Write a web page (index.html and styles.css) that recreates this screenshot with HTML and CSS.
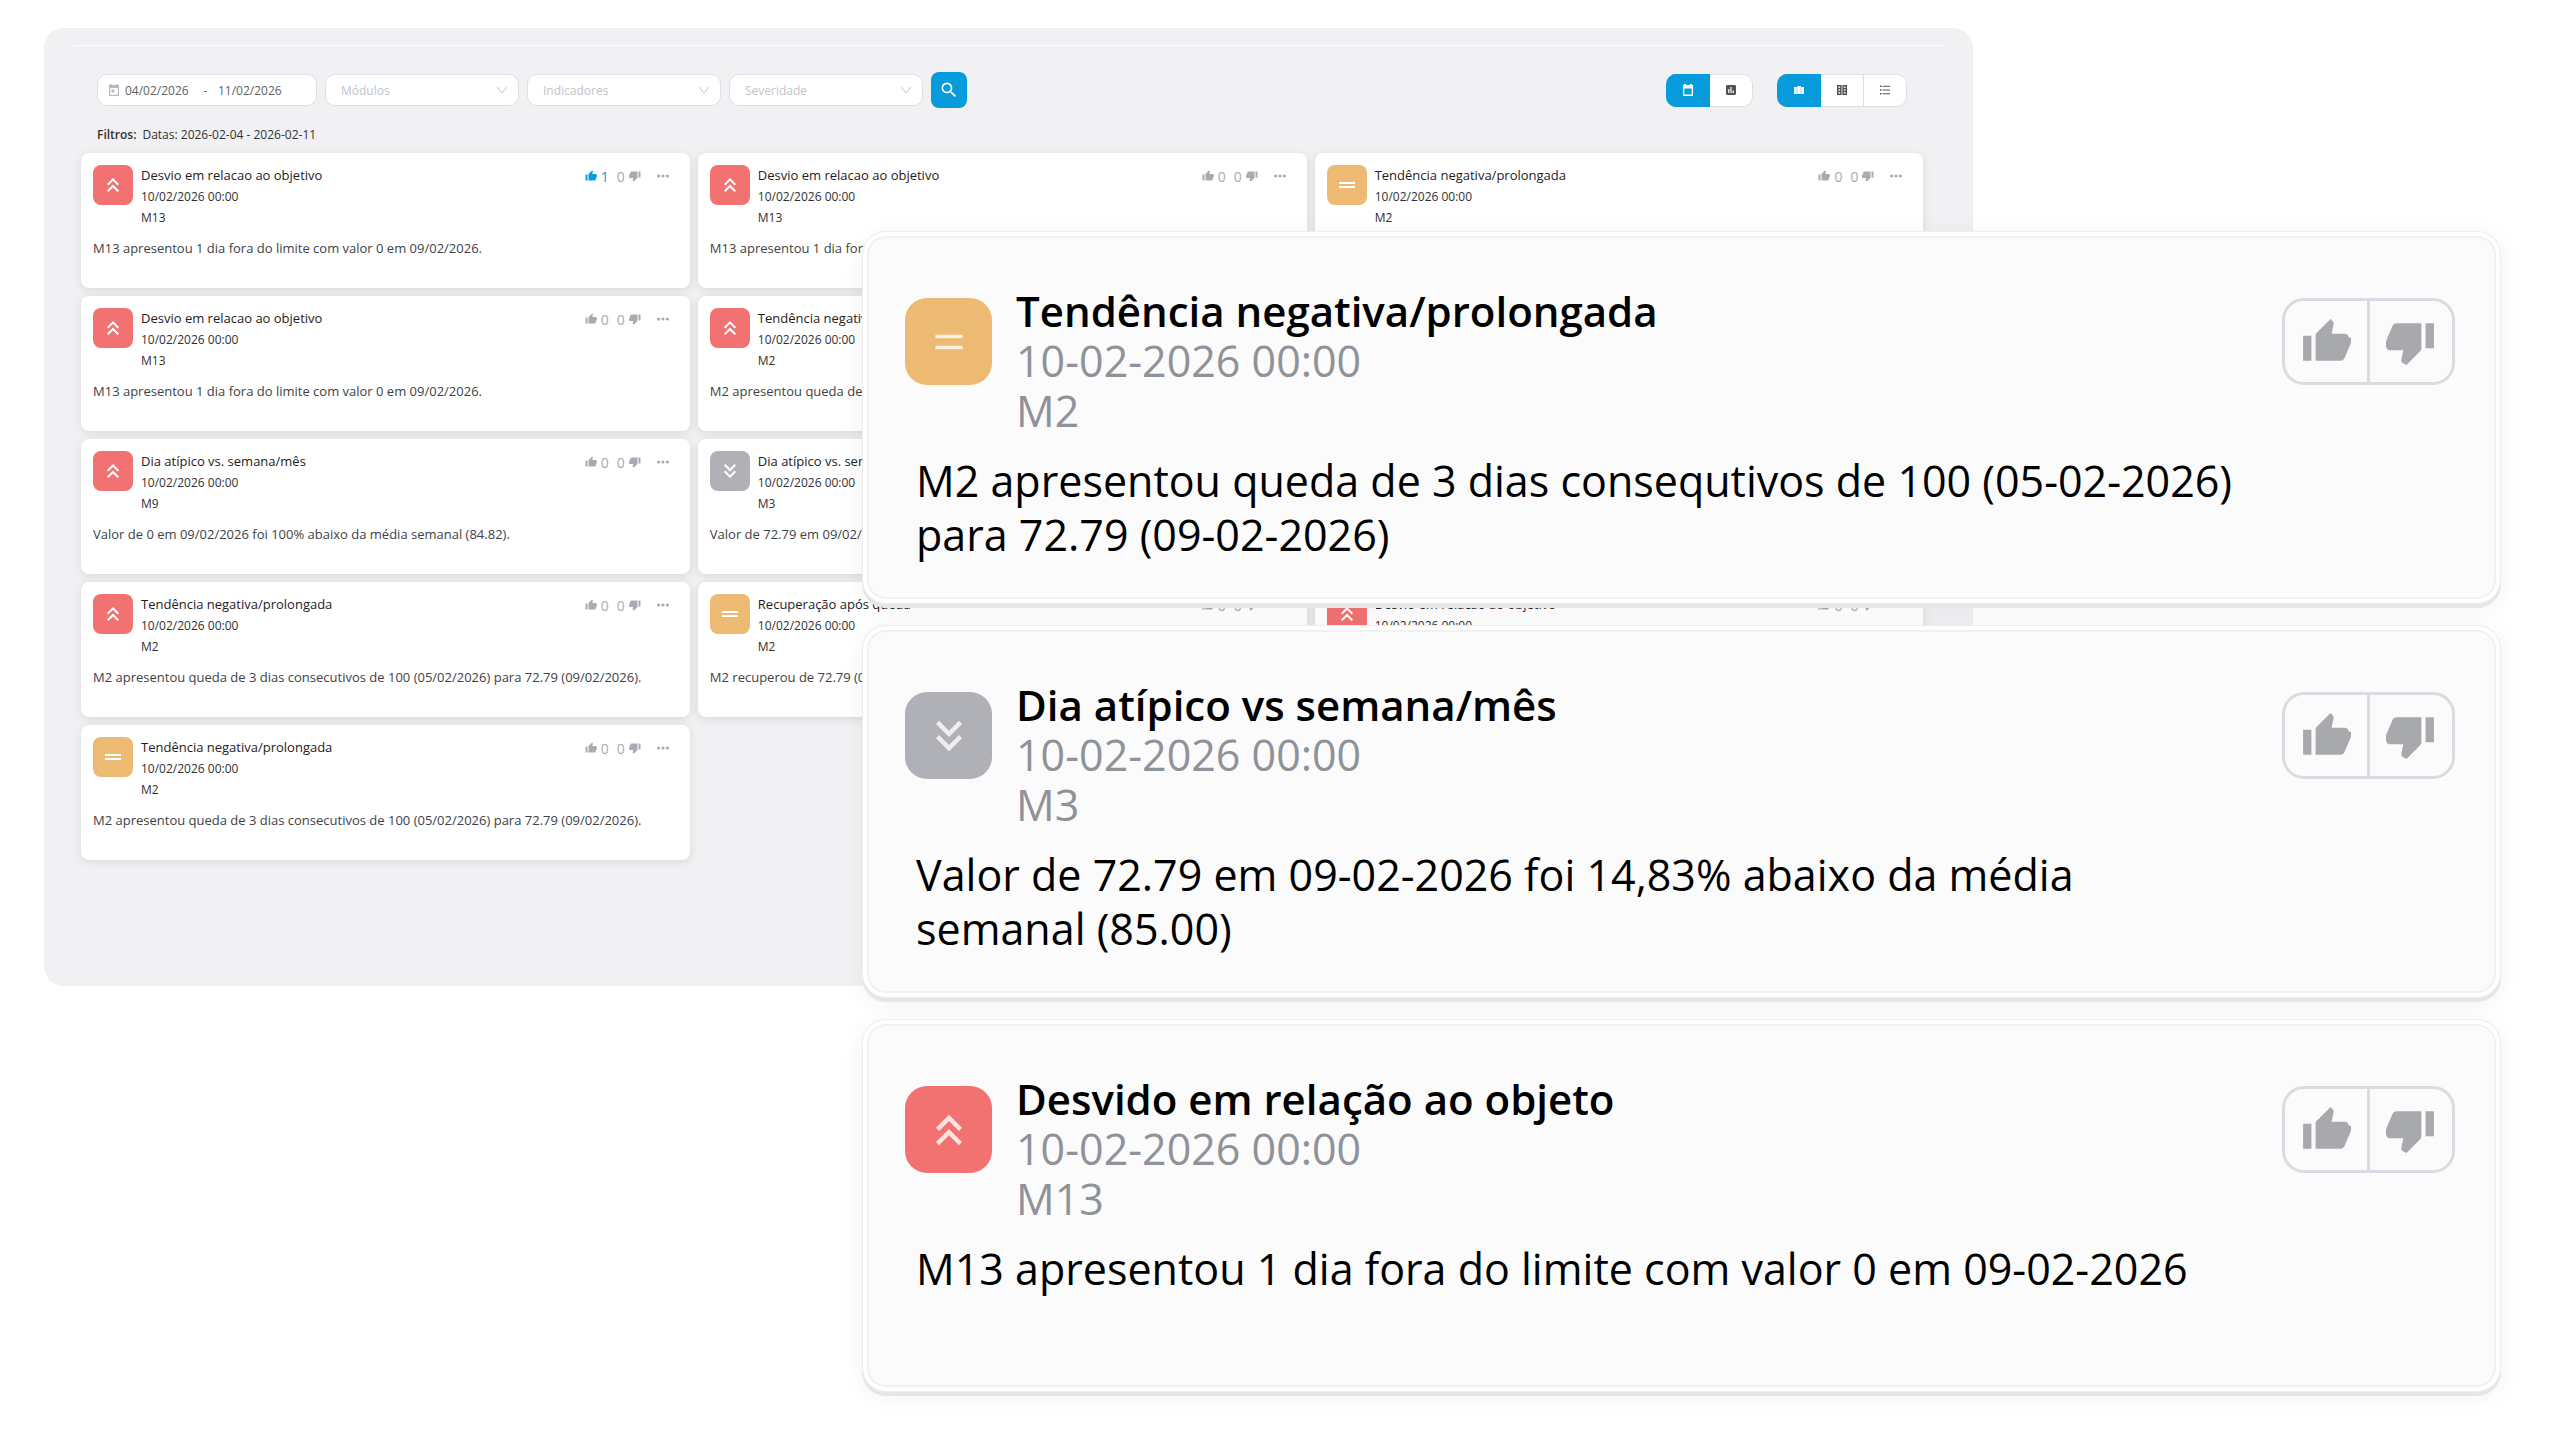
FILE: index.html
```
<!DOCTYPE html>
<html lang="pt">
<head>
    <title>Alertas</title>
    <meta charset="utf-8">
    <meta name="viewport" content="width=device-width, initial-scale=1">
    <link rel="stylesheet" href="styles.css">
</head>
<body>
<!-- shared icons -->
<svg class="sprite" aria-hidden="true">
    <symbol id="up" viewBox="0 0 24 24"><path d="M6 17.59L7.41 19 12 14.42 16.59 19 18 17.59l-6-6zM6 11l1.41 1.41L12 7.83l4.59 4.58L18 11l-6-6z"/></symbol>
    <symbol id="down" viewBox="0 0 24 24"><path d="M18 6.41L16.59 5 12 9.58 7.41 5 6 6.41l6 6zM18 13l-1.41-1.41L12 16.17l-4.59-4.58L6 13l6 6z"/></symbol>
    <symbol id="equal" viewBox="0 0 24 24"><path d="M4 9h16v2H4zM4 13h16v2H4z"/></symbol>
    <symbol id="equal-wide" viewBox="0 0 24 24"><path d="M5.75 8.6h12.5v1.7H5.75zM5.75 13.7h12.5v1.7H5.75z"/></symbol>
    <symbol id="like" viewBox="0 0 24 24"><path d="M1 21h4V9H1v12zm22-11c0-1.1-.9-2-2-2h-6.31l.95-4.57.03-.32c0-.41-.17-.79-.44-1.06L14.17 1 7.59 7.59C7.22 7.95 7 8.45 7 9v12h12c.83 0 1.54-.5 1.84-1.22l3.02-7.05c.09-.23.14-.47.14-.73v-2z"/></symbol>
    <symbol id="dislike" viewBox="0 0 24 24"><path d="M15 3H5c-.83 0-1.54.5-1.84 1.22L.14 11.27C.05 11.5 0 11.74 0 12v2c0 1.1.9 2 2 2h6.31l-.95 4.57-.03.32c0 .41.17.79.44 1.06L9.83 23l6.59-6.59c.36-.36.58-.86.58-1.41V3zm4 0v12h4V3h-4z"/></symbol>
    <symbol id="dots" viewBox="0 0 12 4"><circle cx="1.6" cy="2" r="1.6"/><circle cx="6" cy="2" r="1.6"/><circle cx="10.4" cy="2" r="1.6"/></symbol>
    <symbol id="calendar" viewBox="0 0 12 12"><path fill-rule="evenodd" d="M2 1V0h2v1h4V0h2v1c1 0 1 .4 1 1v9c0 .6-.4 1-1 1H2c-.6 0-1-.4-1-1V2c0-.6.4-1 1-1zm.3 3.6v6h7.4v-6z"/></symbol>
    <symbol id="today" viewBox="0 0 12 12"><path fill-rule="evenodd" d="M2 1V0h1.5v1h5V0H10v1c.6 0 1 .4 1 1v9c0 .6-.4 1-1 1H2c-.6 0-1-.4-1-1V2c0-.6.4-1 1-1zm.2 3v6.8h7.6V4zM3.4 5.5h3v3h-3z"/></symbol>
    <symbol id="chart" viewBox="0 0 12 12"><path fill-rule="evenodd" d="M2.5 1h7C10.4 1 11 1.6 11 2.5v7c0 .9-.6 1.5-1.5 1.5h-7C1.6 11 1 10.4 1 9.5v-7C1 1.6 1.6 1 2.5 1zm.7 4v4h1.2V5zm2.2-2v6h1.2V3zm2.2 3.5V9h1.2V6.5z"/></symbol>
    <symbol id="columns" viewBox="0 0 12 12"><path d="M1 3h2.8v7H1zM4.2 2h3.6v8H4.2zM8.2 3H11v7H8.2z"/></symbol>
    <symbol id="table" viewBox="0 0 12 12"><path fill-rule="evenodd" d="M1 1h4.6v10H1zm5.4 0H11v10H6.4zM2.5 2.6V4h1.6V2.6zm0 2.7v1.4h1.6V5.3zm0 2.7v1.4h1.6V8zm5.4-5.4V4h1.6V2.6zm0 2.7v1.4h1.6V5.3zm0 2.7v1.4h1.6V8z"/></symbol>
    <symbol id="list" viewBox="0 0 12 12"><path d="M1 1.500h1.500V3H1zM3.600 1.700H11v1H3.600zM1 5.200h1.500v1.500H1zM3.600 5.500H11v1H3.600zM1 8.900h1.500v1.500H1zM3.600 9.200H11v1H3.600z"/></symbol>
</svg>

<main class="board">
    <div class="board-inner">
        <form class="toolbar">
            <div class="date-range">
                <svg class="icon-12"><use href="#today"/></svg>
                <input type="text" id="date_from" aria-label="Data inicial" value="04/02/2026">
                <span>-</span>
                <input type="text" id="date_to" aria-label="Data final" value="11/02/2026">
            </div>
            <div class="select">
                <select id="modulos" aria-label="Módulos">
                    <option>Módulos</option>
                </select>
                <svg viewBox="0 0 12 8"><path d="M1 1l5 6 5-6"/></svg>
            </div>
            <div class="select">
                <select id="indicadores" aria-label="Indicadores">
                    <option>Indicadores</option>
                </select>
                <svg viewBox="0 0 12 8"><path d="M1 1l5 6 5-6"/></svg>
            </div>
            <div class="select">
                <select id="severidade" aria-label="Severidade">
                    <option>Severidade</option>
                </select>
                <svg viewBox="0 0 12 8"><path d="M1 1l5 6 5-6"/></svg>
            </div>
            <button class="btn-search" type="button" aria-label="Pesquisar">
                <svg viewBox="0 0 24 24"><path d="M15.5 14h-.79l-.28-.27A6.47 6.47 0 0 0 16 9.5 6.5 6.5 0 1 0 9.5 16c1.61 0 3.09-.59 4.23-1.57l.27.28v.79l5 4.99L20.49 19l-4.99-5zm-6 0C7.01 14 5 11.99 5 9.5S7.01 5 9.5 5 14 7.01 14 9.5 11.99 14 9.5 14z"/></svg>
            </button>
            <div class="toggles">
                <div class="btn-group">
                    <button class="active" type="button" aria-label="Calendário"><svg class="icon-12"><use href="#calendar"/></svg></button>
                    <button type="button" aria-label="Gráfico"><svg class="icon-12"><use href="#chart"/></svg></button>
                </div>
                <div class="btn-group">
                    <button class="active" type="button" aria-label="Cartões"><svg class="icon-12"><use href="#columns"/></svg></button>
                    <button type="button" aria-label="Tabela"><svg class="icon-12"><use href="#table"/></svg></button>
                    <button type="button" aria-label="Lista"><svg class="icon-12"><use href="#list"/></svg></button>
                </div>
            </div>
        </form>
        <p class="filters"><b>Filtros:</b> <span>Datas: 2026-02-04 - 2026-02-11</span></p>
        <div class="cards" id="cards"></div>
    </div>
</main>

<section class="highlights" id="highlights"></section>

<script type="text/javascript">
    let fora = 'M13 apresentou 1 dia fora do limite com valor 0 em 09/02/2026.'
    let queda = 'M2 apresentou queda de 3 dias consecutivos de 100 (05/02/2026) para 72.79 (09/02/2026).'

    let alertList = [
        ['up', 'Desvio em relacao ao objetivo', 'M13', fora, 1],
        ['up', 'Desvio em relacao ao objetivo', 'M13', 'M13 apresentou 1 dia fora', 0],
        ['equal', 'Tendência negativa/prolongada', 'M2', '', 0],
        ['up', 'Desvio em relacao ao objetivo', 'M13', fora, 0],
        ['up', 'Tendência negativa', 'M2', 'M2 apresentou queda de'],
        null,
        ['up', 'Dia atípico vs. semana/mês', 'M9', 'Valor de 0 em 09/02/2026 foi 100% abaixo da média semanal (84.82).', 0],
        ['down', 'Dia atípico vs. sem', 'M3', 'Valor de 72.79 em 09/02/'],
        null,
        ['up', 'Tendência negativa/prolongada', 'M2', queda, 0],
        ['equal', 'Recuperação após queda', 'M2', 'M2 recuperou de 72.79 (0', 0],
        ['up', 'Desvio em relacao ao objetivo', '', '', 0],
        ['equal', 'Tendência negativa/prolongada', 'M2', queda, 0]
    ]

    let highlightList = [
        ['equal', 'equal-wide', 'Tendência negativa/prolongada', 'M2', 'M2 apresentou queda de 3 dias consequtivos de 100 (05-02-2026)<br>para 72.79 (09-02-2026)'],
        ['down', 'down', 'Dia atípico vs semana/mês', 'M3', 'Valor de 72.79 em 09-02-2026 foi 14,83% abaixo da média<br>semanal (85.00)'],
        ['up', 'up', 'Desvido em relação ao objeto', 'M13', 'M13 apresentou 1 dia fora do limite com valor 0 em 09-02-2026']
    ]

    function icon(name) {
        return `<svg><use href="#${name}"/></svg>`
    }

    function showVotes(likes) {
        if (likes == null) {
            return ''
        }
        return `<div class="votes">
            <button class="${likes > 0 ? 'voted' : ''}" type="button" aria-label="Gosto">${icon('like')}${likes}</button>
            <button type="button" aria-label="Não gosto">0${icon('dislike')}</button>
            <button class="more" type="button" aria-label="Mais">${icon('dots')}</button>
        </div>`
    }

    function showCards() {
        let html = ''
        for (let item of alertList) {
            if (item == null) {
                html += '<article class="card"></article>'
                continue;
            }
            let [level, title, code, text, likes] = item
            html += `<article class="card">
                <div class="card-head">
                    <div class="level level-${level}">${icon(level)}</div>
                    <div class="card-info">
                        <h3>${title}</h3>
                        <p>10/02/2026 00:00</p>
                        <p>${code}</p>
                    </div>
                    ${showVotes(likes)}
                </div>
                <p class="card-text">${text}</p>
            </article>`
        }
        document.getElementById('cards').innerHTML = html
    }

    function showHighlights() {
        let html = ''
        for (let [level, glyph, title, code, text] of highlightList) {
            html += `<article class="highlight">
                <div class="highlight-head">
                    <div class="level level-${level}">${icon(glyph)}</div>
                    <div class="highlight-info">
                        <h2>${title}</h2>
                        <p>10-02-2026 00:00</p>
                        <p>${code}</p>
                    </div>
                    <div class="rate">
                        <button type="button" aria-label="Gosto">${icon('like')}</button>
                        <button type="button" aria-label="Não gosto">${icon('dislike')}</button>
                    </div>
                </div>
                <p class="highlight-text">${text}</p>
            </article>`
        }
        document.getElementById('highlights').innerHTML = html
    }

    showCards()
    showHighlights()
</script>
</body>
</html>
```
FILE: styles.css
```
* {
    box-sizing: border-box;
}

body {
    position: relative;
    margin: 0;
    padding: 28px 0 0 44px;
    min-height: 100vh;
    background: #fff;
    color: #303133;
    font-family: "Segoe UI", "Open Sans", "Noto Sans", sans-serif;
    font-size: 12px;
}

h2, h3, p {
    margin: 0;
}

button, input, select {
    font: inherit;
    color: inherit;
    margin: 0;
    padding: 0;
    border: 0;
    background: none;
}

svg {
    display: block;
    fill: currentColor;
}

.sprite {
    display: none;
}

.icon-12 {
    width: 12px;
    height: 12px;
}

/* board */
.board {
    width: 76.75%;
    padding: 17px 30px 126px;
    border-radius: 20px;
    background: #f1f1f3;
}

.board-inner {
    padding: 26px 20px 0 7px;
    border-top: 1px solid #fff;
}

.toolbar {
    display: flex;
    align-items: center;
    gap: 8px;
    padding: 0 16px;
}

.date-range {
    display: flex;
    align-items: center;
    width: 220px;
    height: 32px;
    padding: 0 10px;
    border: 1px solid #dcdfe6;
    border-radius: 10px;
    background: #fff;
    color: #606266;
}

.date-range svg {
    color: #b4b8c0;
    margin-right: 5px;
}

.date-range input {
    width: 68px;
}

.date-range span {
    width: 25px;
    text-align: center;
}

.select {
    position: relative;
    width: 194px;
}

.select select {
    display: block;
    width: 100%;
    height: 32px;
    padding: 0 15px;
    border: 1px solid #dcdfe6;
    border-radius: 10px;
    background: #fff;
    color: #c0c4cc;
    appearance: none;
}

.select svg {
    position: absolute;
    top: 12px;
    right: 11px;
    width: 12px;
    height: 8px;
    fill: none;
    stroke: #c0c4cc;
}

.btn-search {
    display: flex;
    align-items: center;
    justify-content: center;
    width: 36px;
    height: 36px;
    border-radius: 8px;
    background: #089bdc;
    color: #fff;
}

.btn-search svg {
    width: 20px;
    height: 20px;
}

.toggles {
    display: flex;
    gap: 24px;
    margin-left: auto;
}

.btn-group {
    display: flex;
    height: 33px;
    border-radius: 10px;
    overflow: hidden;
}

.btn-group button {
    display: flex;
    align-items: center;
    justify-content: center;
    width: 43px;
    border: 1px solid #dcdfe6;
    border-left: 0;
    background: #fff;
    color: #505256;
}

.btn-group button:last-child {
    border-radius: 0 10px 10px 0;
}

.btn-group .active {
    width: 44px;
    border-color: #089bdc;
    background: #089bdc;
    color: #fff;
}

.filters {
    display: flex;
    gap: 6px;
    margin: 17px 0 8px;
    padding: 0 16px;
    line-height: 20px;
}

.filters b {
    font-weight: 600;
}

.cards {
    display: grid;
    grid-template-columns: repeat(3, 1fr);
    grid-auto-rows: 135px;
    gap: 8px;
}

.card {
    padding: 12px 21px 0 12px;
    border-radius: 8px;
    background: #fff;
    box-shadow: 0 2px 10px rgba(0, 0, 0, .1);
}

.card-head {
    display: flex;
    gap: 8px;
}

.level {
    display: flex;
    align-items: center;
    justify-content: center;
    width: 40px;
    height: 40px;
    border-radius: 8px;
    color: #fff;
}

.level svg {
    width: 24px;
    height: 24px;
}

.level-up {
    background: #f27272;
}

.level-equal {
    background: #ecba72;
}

.level-down {
    background: #b0b1b7;
}

.card-info {
    flex: 1;
    line-height: 21px;
}

.card-info h3 {
    font-size: 13px;
    font-weight: 500;
    color: #1f2023;
}

.card-text {
    margin-top: 10px;
    font-size: 13px;
    line-height: 20px;
    color: #404246;
}

.votes {
    display: flex;
    gap: 8px;
    height: 22px;
}

.votes button {
    display: flex;
    align-items: center;
    gap: 4px;
    font-size: 14px;
    font-weight: 500;
    color: #a8abb2;
}

.votes svg {
    width: 12px;
    height: 12px;
}

.votes .voted {
    color: #089bdc;
}

.votes .more {
    margin-left: 8px;
}

/* highlighted alerts, on top of the board */
.highlights {
    position: absolute;
    top: 231px;
    left: 33.7%;
    right: 57px;
    display: flex;
    flex-direction: column;
    gap: 21px;
}

.highlight {
    height: 373px;
    padding: 54px 45px 0 42px;
    border: 1px solid #eeeeef;
    border-radius: 24px;
    background: #fbfbfc;
    box-shadow: inset 0 0 0 4px #fff, inset 0 0 0 6px #f1f1f2, 0 4px 0 #e6e6e7, 0 4px 24px rgba(0, 0, 0, .06);
}

.highlight-head {
    display: flex;
}

.highlight .level {
    width: 87px;
    height: 87px;
    margin-top: 12px;
    border-radius: 22px;
    color: rgba(255, 255, 255, .8);
}

.highlight .level svg {
    width: 52px;
    height: 52px;
}

.highlight-info {
    flex: 1;
    margin-left: 24px;
    font-size: 43px;
    line-height: 50px;
    color: #909299;
}

.highlight h2 {
    font-size: 42px;
    font-weight: 600;
    color: #000;
}

.rate {
    display: flex;
    width: 173px;
    height: 87px;
    margin-top: 12px;
    border: 3px solid #d9dce3;
    border-radius: 22px;
}

.rate button {
    flex: 1;
    display: flex;
    align-items: center;
    justify-content: center;
    color: #a7a9ac;
}

.rate button + button {
    border-left: 3px solid #d9dce3;
}

.rate svg {
    width: 50px;
    height: 50px;
}

.highlight-text {
    margin: 18px 0 0 11px;
    font-size: 43px;
    line-height: 54px;
    color: #000;
}
```
